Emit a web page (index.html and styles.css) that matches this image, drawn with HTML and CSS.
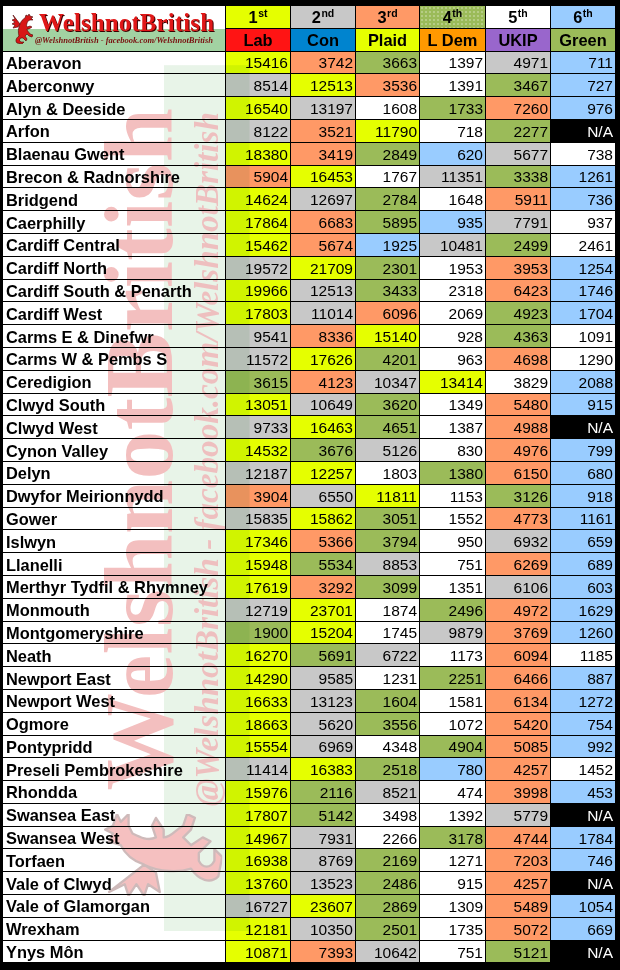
FILE: index.html
```html
<!DOCTYPE html>
<html lang="en">
<head>
<meta charset="utf-8">
<title>WelshnotBritish – results by constituency</title>
<link rel="stylesheet" href="styles.css">
</head>
<body>
<div class="sheet">
  <div class="logo">
    <svg class="dragon" viewBox="0 0 21 31" width="21" height="31" aria-hidden="true">
      <path d="M8 11 L1 2 L3 6 L0 7 L3 9 L0 11 L3 12 L1 15 L6 14 Z" />
      <path d="M8 11 C9 8 11 6 13 5 L14 2 L16 3 L17 1 L18 3 L21 4 L19 5 L21 7 L18 7 L16 8 C15 10 14 12 15 14 L18 13 L20 14 L17 16 L15 16 C15 18 17 19 18 21 L21 22 L20 24 L17 23 L15 21 L13 23 L15 26 L14 28 L11 25 L9 25 C7 26 7 28 9 29 L12 29 L10 31 L5 30 C3 28 4 25 7 23 C6 20 6 15 8 11 Z" />
    </svg>
    <div class="logo-text">
      <div class="logo-title">WelshnotBritish</div>
      <div class="logo-sub">@WelshnotBritish - facebook.com/WelshnotBritish</div>
    </div>
  </div>
  <div class="h y"><span>1<sup>st</sup></span></div>
  <div class="h g"><span>2<sup>nd</sup></span></div>
  <div class="h s"><span>3<sup>rd</sup></span></div>
  <div class="h n dot"><span>4<sup>th</sup></span></div>
  <div class="h w"><span>5<sup>th</sup></span></div>
  <div class="h b"><span>6<sup>th</sup></span></div>
  <div class="h lab">Lab</div>
  <div class="h con">Con</div>
  <div class="h y">Plaid</div>
  <div class="h ld">L Dem</div>
  <div class="h ukip">UKIP</div>
  <div class="h n">Green</div>

  <div class="nm">Aberavon</div><div class="c y">15416</div><div class="c s">3742</div><div class="c n">3663</div><div class="c w">1397</div><div class="c g">4971</div><div class="c b">711</div>
  <div class="nm">Aberconwy</div><div class="c g">8514</div><div class="c y">12513</div><div class="c s">3536</div><div class="c w">1391</div><div class="c n">3467</div><div class="c b">727</div>
  <div class="nm">Alyn &amp; Deeside</div><div class="c y">16540</div><div class="c g">13197</div><div class="c w">1608</div><div class="c n">1733</div><div class="c s">7260</div><div class="c b">976</div>
  <div class="nm">Arfon</div><div class="c g">8122</div><div class="c s">3521</div><div class="c y">11790</div><div class="c w">718</div><div class="c n">2277</div><div class="c k">N/A</div>
  <div class="nm">Blaenau Gwent</div><div class="c y">18380</div><div class="c s">3419</div><div class="c n">2849</div><div class="c b">620</div><div class="c g">5677</div><div class="c w">738</div>
  <div class="nm">Brecon &amp; Radnorshire</div><div class="c s">5904</div><div class="c y">16453</div><div class="c w">1767</div><div class="c g">11351</div><div class="c n">3338</div><div class="c b">1261</div>
  <div class="nm">Bridgend</div><div class="c y">14624</div><div class="c g">12697</div><div class="c n">2784</div><div class="c w">1648</div><div class="c s">5911</div><div class="c b">736</div>
  <div class="nm">Caerphilly</div><div class="c y">17864</div><div class="c s">6683</div><div class="c n">5895</div><div class="c b">935</div><div class="c g">7791</div><div class="c w">937</div>
  <div class="nm">Cardiff Central</div><div class="c y">15462</div><div class="c s">5674</div><div class="c b">1925</div><div class="c g">10481</div><div class="c n">2499</div><div class="c w">2461</div>
  <div class="nm">Cardiff North</div><div class="c g">19572</div><div class="c y">21709</div><div class="c n">2301</div><div class="c w">1953</div><div class="c s">3953</div><div class="c b">1254</div>
  <div class="nm">Cardiff South &amp; Penarth</div><div class="c y">19966</div><div class="c g">12513</div><div class="c n">3433</div><div class="c w">2318</div><div class="c s">6423</div><div class="c b">1746</div>
  <div class="nm">Cardiff West</div><div class="c y">17803</div><div class="c g">11014</div><div class="c s">6096</div><div class="c w">2069</div><div class="c n">4923</div><div class="c b">1704</div>
  <div class="nm">Carms E &amp; Dinefwr</div><div class="c g">9541</div><div class="c s">8336</div><div class="c y">15140</div><div class="c w">928</div><div class="c n">4363</div><div class="c w">1091</div>
  <div class="nm">Carms W &amp; Pembs S</div><div class="c g">11572</div><div class="c y">17626</div><div class="c n">4201</div><div class="c w">963</div><div class="c s">4698</div><div class="c w">1290</div>
  <div class="nm">Ceredigion</div><div class="c n">3615</div><div class="c s">4123</div><div class="c g">10347</div><div class="c y">13414</div><div class="c w">3829</div><div class="c b">2088</div>
  <div class="nm">Clwyd South</div><div class="c y">13051</div><div class="c g">10649</div><div class="c n">3620</div><div class="c w">1349</div><div class="c s">5480</div><div class="c b">915</div>
  <div class="nm">Clwyd West</div><div class="c g">9733</div><div class="c y">16463</div><div class="c n">4651</div><div class="c w">1387</div><div class="c s">4988</div><div class="c k">N/A</div>
  <div class="nm">Cynon Valley</div><div class="c y">14532</div><div class="c n">3676</div><div class="c g">5126</div><div class="c w">830</div><div class="c s">4976</div><div class="c b">799</div>
  <div class="nm">Delyn</div><div class="c g">12187</div><div class="c y">12257</div><div class="c w">1803</div><div class="c n">1380</div><div class="c s">6150</div><div class="c b">680</div>
  <div class="nm">Dwyfor Meirionnydd</div><div class="c s">3904</div><div class="c g">6550</div><div class="c y">11811</div><div class="c w">1153</div><div class="c n">3126</div><div class="c b">918</div>
  <div class="nm">Gower</div><div class="c g">15835</div><div class="c y">15862</div><div class="c n">3051</div><div class="c w">1552</div><div class="c s">4773</div><div class="c b">1161</div>
  <div class="nm">Islwyn</div><div class="c y">17346</div><div class="c s">5366</div><div class="c n">3794</div><div class="c w">950</div><div class="c g">6932</div><div class="c b">659</div>
  <div class="nm">Llanelli</div><div class="c y">15948</div><div class="c n">5534</div><div class="c g">8853</div><div class="c w">751</div><div class="c s">6269</div><div class="c b">689</div>
  <div class="nm">Merthyr Tydfil &amp; Rhymney</div><div class="c y">17619</div><div class="c s">3292</div><div class="c n">3099</div><div class="c w">1351</div><div class="c g">6106</div><div class="c b">603</div>
  <div class="nm">Monmouth</div><div class="c g">12719</div><div class="c y">23701</div><div class="c w">1874</div><div class="c n">2496</div><div class="c s">4972</div><div class="c b">1629</div>
  <div class="nm">Montgomeryshire</div><div class="c n">1900</div><div class="c y">15204</div><div class="c w">1745</div><div class="c g">9879</div><div class="c s">3769</div><div class="c b">1260</div>
  <div class="nm">Neath</div><div class="c y">16270</div><div class="c n">5691</div><div class="c g">6722</div><div class="c w">1173</div><div class="c s">6094</div><div class="c w">1185</div>
  <div class="nm">Newport East</div><div class="c y">14290</div><div class="c g">9585</div><div class="c w">1231</div><div class="c n">2251</div><div class="c s">6466</div><div class="c b">887</div>
  <div class="nm">Newport West</div><div class="c y">16633</div><div class="c g">13123</div><div class="c n">1604</div><div class="c w">1581</div><div class="c s">6134</div><div class="c b">1272</div>
  <div class="nm">Ogmore</div><div class="c y">18663</div><div class="c g">5620</div><div class="c n">3556</div><div class="c w">1072</div><div class="c s">5420</div><div class="c b">754</div>
  <div class="nm">Pontypridd</div><div class="c y">15554</div><div class="c g">6969</div><div class="c w">4348</div><div class="c n">4904</div><div class="c s">5085</div><div class="c b">992</div>
  <div class="nm">Preseli Pembrokeshire</div><div class="c g">11414</div><div class="c y">16383</div><div class="c n">2518</div><div class="c b">780</div><div class="c s">4257</div><div class="c w">1452</div>
  <div class="nm">Rhondda</div><div class="c y">15976</div><div class="c n">2116</div><div class="c g">8521</div><div class="c w">474</div><div class="c s">3998</div><div class="c b">453</div>
  <div class="nm">Swansea East</div><div class="c y">17807</div><div class="c n">5142</div><div class="c w">3498</div><div class="c w">1392</div><div class="c g">5779</div><div class="c k">N/A</div>
  <div class="nm">Swansea West</div><div class="c y">14967</div><div class="c g">7931</div><div class="c w">2266</div><div class="c n">3178</div><div class="c s">4744</div><div class="c b">1784</div>
  <div class="nm">Torfaen</div><div class="c y">16938</div><div class="c g">8769</div><div class="c n">2169</div><div class="c w">1271</div><div class="c s">7203</div><div class="c b">746</div>
  <div class="nm">Vale of Clwyd</div><div class="c y">13760</div><div class="c g">13523</div><div class="c n">2486</div><div class="c w">915</div><div class="c s">4257</div><div class="c k">N/A</div>
  <div class="nm">Vale of Glamorgan</div><div class="c g">16727</div><div class="c y">23607</div><div class="c n">2869</div><div class="c w">1309</div><div class="c s">5489</div><div class="c b">1054</div>
  <div class="nm">Wrexham</div><div class="c y">12181</div><div class="c g">10350</div><div class="c n">2501</div><div class="c w">1735</div><div class="c s">5072</div><div class="c b">669</div>
  <div class="nm">Ynys Môn</div><div class="c y">10871</div><div class="c s">7393</div><div class="c g">10642</div><div class="c w">751</div><div class="c n">5121</div><div class="c k">N/A</div>

  <div class="wm" aria-hidden="true">
    <div class="logo logo-wm">
      <svg class="dragon" viewBox="0 0 21 31" width="21" height="31">
        <path d="M8 11 L1 2 L3 6 L0 7 L3 9 L0 11 L3 12 L1 15 L6 14 Z" />
        <path d="M8 11 C9 8 11 6 13 5 L14 2 L16 3 L17 1 L18 3 L21 4 L19 5 L21 7 L18 7 L16 8 C15 10 14 12 15 14 L18 13 L20 14 L17 16 L15 16 C15 18 17 19 18 21 L21 22 L20 24 L17 23 L15 21 L13 23 L15 26 L14 28 L11 25 L9 25 C7 26 7 28 9 29 L12 29 L10 31 L5 30 C3 28 4 25 7 23 C6 20 6 15 8 11 Z" />
      </svg>
      <div class="logo-text">
        <div class="logo-title">WelshnotBritish</div>
        <div class="logo-sub">@WelshnotBritish - facebook.com/WelshnotBritish</div>
      </div>
    </div>
  </div>
</div>
</body>
</html>
```

FILE: styles.css
```css
html, body {
  margin: 0;
  padding: 0;
  background: #000;
}

.sheet {
  position: relative;
  width: 620px;
  height: 970px;
  box-sizing: border-box;
  padding: 6px 5px 0 3px;
  display: grid;
  grid-template-columns: 222px 64px 64px 63px 65px 64px 64px;
  grid-auto-rows: 21.8px;
  gap: 1px;
  align-content: start;
  background: #000;
  font-family: "Liberation Sans", Arial, sans-serif;
  color: #000;
  overflow: hidden;
}

/* ---------- logo ---------- */
.logo {
  grid-row: span 2;
  display: flex;
  align-items: flex-start;
  padding-left: 9px;
  background: linear-gradient(to bottom, #fff 0, #fff 23px, #a2d2a2 23px, #a2d2a2 100%);
  overflow: hidden;
}

.dragon {
  flex: none;
  margin-top: 7px;
  fill: #d81616;
  stroke: #4a0000;
  stroke-width: 0.6;
  stroke-linejoin: round;
}

.logo-text {
  display: flex;
  flex-direction: column;
  margin-left: 1px;
  white-space: nowrap;
}

.logo-title {
  margin-top: 5px;
  margin-left: 5px;
  font-family: "Liberation Serif", "Times New Roman", serif;
  font-weight: bold;
  font-size: 25px;
  line-height: 24px;
  letter-spacing: 0.1px;
  color: #e01818;
  text-shadow: 1px 1px 0 #3a0000;
}

.logo-sub {
  margin-left: 1px;
  font-family: "Liberation Serif", "Times New Roman", serif;
  font-style: italic;
  font-weight: bold;
  font-size: 8.5px;
  line-height: 10px;
  color: #7a1010;
}

/* ---------- watermark ---------- */
.wm {
  position: absolute;
  left: 74px;
  top: 931px;
  width: 222px;
  height: 44.6px;
  transform-origin: 0 0;
  transform: rotate(-90deg) scale(3.9);
  opacity: 0.27;
  mix-blend-mode: multiply;
  pointer-events: none;
}

.logo-wm {
  height: 100%;
  box-sizing: border-box;
  background: linear-gradient(to bottom, transparent 0, transparent 23px, #a8d4a8 23px, #a8d4a8 100%);
}

.logo-wm .logo-title {
  text-shadow: none;
  color: #d01010;
}

.logo-wm .logo-sub {
  color: #c01010;
}

/* ---------- cells ---------- */
.h,
.c,
.nm {
  box-sizing: border-box;
  padding-top: 2px;
  display: flex;
  align-items: center;
  white-space: nowrap;
  overflow: hidden;
}

.h {
  justify-content: center;
  font-weight: bold;
  font-size: 16.4px;
}

.h sup {
  font-size: 10.5px;
  line-height: 0;
  vertical-align: 6px;
  margin-left: 0.5px;
}

.nm {
  background: #fff;
  padding-left: 3px;
  font-weight: bold;
  font-size: 16.4px;
}

.c {
  justify-content: flex-end;
  padding-right: 2px;
  font-size: 15.5px;
}

/* rank colours */
.y { background: #e5ff00; }
.g { background: #c8c8c8; }
.s { background: #ff9966; }
.n { background: #9bbb59; }
.w { background: #fff; }
.b { background: #99ccff; }
.k { background: #000; color: #fff; }

.dot {
  background-color: #9bbb59;
  background-image: radial-gradient(circle, rgba(255, 255, 255, 0.28) 0.7px, transparent 0.9px);
  background-size: 4px 4px;
}

/* party colours */
.lab { background: #ff1414; }
.con { background: #0084cf; }
.ld { background: #ff9900; }
.ukip { background: #9966cc; }
```
